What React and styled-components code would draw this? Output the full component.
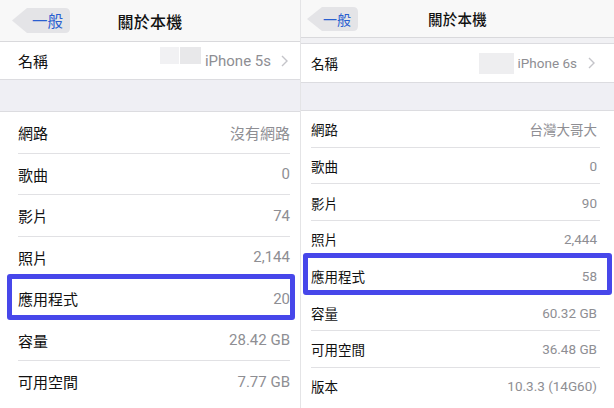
import React from 'react';
import styled, { createGlobalStyle } from 'styled-components';

const GlobalStyle = createGlobalStyle`
  html, body { margin: 0; padding: 0; background: #fff; }
  body { font-family: Roboto, "Noto Sans CJK TC", sans-serif; -webkit-font-smoothing: antialiased; }
  * { box-sizing: border-box; }
`;

const LEFT = {
  width: 300, font: 15, titleFont: 16, backFont: 15.5,
  navH: 42, bandH: 0, nameH: 38, gapH: 32, rowH: 41.5,
  padL: 18, padR: 10, sepR: 10,
  back: { x: 12, top: 8, w: 58, h: 25, textPad: 20 },
  hl: { top: -4, bottom: 0, left: 7, right: 5 },
  chevGap: 10,
  name: 'iPhone 5s',
  boxes: [{ w: 19, h: 17, c: '#f1f1f3' }, { w: 21, h: 17, c: '#e8e8ea' }],
  boxShift: -5,
  rows: [
    ['網路', '沒有網路'], ['歌曲', '0'], ['影片', '74'], ['照片', '2,144'],
    ['應用程式', '20', true], ['容量', '28.42 GB'], ['可用空間', '7.77 GB'],
  ],
};

const RIGHT = {
  width: 314, font: 13.5, titleFont: 14.5, backFont: 14,
  navH: 38, bandH: 6, nameH: 39, gapH: 28, rowH: 36.7,
  padL: 10, padR: 17, sepR: 14,
  back: { x: 6, top: 8, w: 51, h: 24, textPad: 16 },
  hl: { top: -5, bottom: -1, left: 2, right: 2 },
  chevGap: 11,
  name: 'iPhone 6s',
  boxes: [{ w: 35, h: 21, c: '#eeeef0' }],
  boxShift: 0,
  rows: [
    ['網路', '台灣大哥大'], ['歌曲', '0'], ['影片', '90'], ['照片', '2,444'],
    ['應用程式', '58', true], ['容量', '60.32 GB'], ['可用空間', '36.48 GB'],
    ['版本', '10.3.3 (14G60)'],
  ],
};

const Page = styled.div`
  display: flex;
  width: 614px;
  height: 408px;
  overflow: hidden;
  background: #fff;
`;

const Panel = styled.section`
  position: relative;
  flex: 0 0 ${(p) => p.$w}px;
  display: flex;
  flex-direction: column;
  background: #fff;
  border-left: ${(p) => (p.$divider ? '1px solid #e4e4e6' : 'none')};
`;

const NavBar = styled.header`
  height: ${(p) => p.$h}px;
  flex: 0 0 auto;
  display: grid;
  grid-template-columns: 1fr auto 1fr;
  align-items: center;
  background: #f8f8f8;
  border-bottom: 1px solid #d9d9dc;
`;

const BackButton = styled.div`
  position: relative;
  justify-self: start;
  margin-left: ${(p) => p.$x}px;
  width: ${(p) => p.$w}px;
  height: ${(p) => p.$h}px;
  display: flex;
  align-items: center;
  padding-left: ${(p) => p.$pad}px;
  color: #2a5fd0;
  font-family: "Noto Sans CJK TC", sans-serif;
  font-size: ${(p) => p.$font}px;
  line-height: 1;
`;

const BackShape = styled.svg`
  position: absolute;
  inset: 0;
  z-index: 0;
`;

const BackLabel = styled.span`
  position: relative;
  z-index: 1;
`;

const Title = styled.h1`
  margin: 0;
  font-family: "Noto Sans CJK TC", sans-serif;
  font-size: ${(p) => p.$font}px;
  font-weight: 500;
  color: #111;
  letter-spacing: 0.3px;
`;

const Band = styled.div`
  height: ${(p) => p.$h}px;
  flex: 0 0 auto;
  background: #f1f1f4;
  border-bottom: 1px solid #dcdce0;
`;

const Row = styled.div`
  position: relative;
  flex: 0 0 ${(p) => p.$h}px;
  height: ${(p) => p.$h}px;
  display: flex;
  align-items: center;
  padding: 0 ${(p) => p.$padR}px 0 ${(p) => p.$padL}px;
  font-size: ${(p) => p.$font}px;
  background: #fff;

  &::after {
    content: '';
    display: ${(p) => (p.$sep ? 'block' : 'none')};
    position: absolute;
    left: ${(p) => p.$padL}px;
    right: ${(p) => p.$sepR}px;
    bottom: 0;
    height: 1px;
    background: #e1e1e4;
  }
`;

const NameRow = styled(Row)`
  border-bottom: 1px solid #dcdce0;
`;

const Highlight = styled.div`
  position: absolute;
  top: ${(p) => p.$hl.top}px;
  bottom: ${(p) => p.$hl.bottom}px;
  left: ${(p) => p.$hl.left}px;
  right: ${(p) => p.$hl.right}px;
  border: 5px solid #4747ea;
  border-radius: 3px;
  z-index: 2;
`;

const Label = styled.span`
  flex: 1;
  font-family: "Noto Sans CJK TC", sans-serif;
  color: #111;
`;

const Value = styled.span`
  color: #8e8e93;
  font-family: Roboto, "Noto Sans CJK TC", sans-serif;
  white-space: nowrap;
`;

const Placeholders = styled.div`
  display: flex;
  gap: 1px;
  margin-right: 4px;
  transform: translateY(${(p) => p.$shift}px);
`;

const Blur = styled.span`
  display: block;
  width: ${(p) => p.$w}px;
  height: ${(p) => p.$h}px;
  background: ${(p) => p.$c};
`;

const Chevron = styled.svg`
  margin-left: ${(p) => p.$gap}px;
  margin-right: 2px;
  flex: 0 0 auto;
`;

const Gap = styled.div`
  flex: 0 0 ${(p) => p.$h}px;
  background: #efeff4;
  border-bottom: 1px solid #dcdce0;
`;

function Phone({ cfg, divider }) {
  const { back } = cfg;
  return (
    <Panel $w={cfg.width} $divider={divider}>
      <NavBar $h={cfg.navH}>
        <BackButton $x={back.x} $w={back.w} $h={back.h} $pad={back.textPad} $font={cfg.backFont}>
          <BackShape width={back.w} height={back.h} viewBox={`0 0 ${back.w} ${back.h}`}>
            <path
              d={`M15 0 H${back.w - 5} Q${back.w} 0 ${back.w} 5 V${back.h - 5} Q${back.w} ${back.h} ${back.w - 5} ${back.h} H15 L0 ${back.h / 2} Z`}
              fill="#e4e4e7"
            />
          </BackShape>
          <BackLabel>一般</BackLabel>
        </BackButton>
        <Title $font={cfg.titleFont}>關於本機</Title>
        <span />
      </NavBar>
      {cfg.bandH > 0 && <Band $h={cfg.bandH} />}
      <NameRow $h={cfg.nameH} $padL={cfg.padL} $padR={cfg.padR} $font={cfg.font}>
        <Label>名稱</Label>
        <Placeholders $shift={cfg.boxShift}>
          {cfg.boxes.map((b, i) => (
            <Blur key={i} $w={b.w} $h={b.h} $c={b.c} />
          ))}
        </Placeholders>
        <Value>{cfg.name}</Value>
        <Chevron $gap={cfg.chevGap} width="7" height="12" viewBox="0 0 7 12">
          <polyline points="1,1 6,6 1,11" fill="none" stroke="#c4c4c9" strokeWidth="1.4" />
        </Chevron>
      </NameRow>
      <Gap $h={cfg.gapH} />
      {cfg.rows.map(([label, value, hl], i) => (
        <Row
          key={label}
          $h={cfg.rowH}
          $padL={cfg.padL}
          $padR={cfg.padR}
          $sepR={cfg.sepR}
          $font={cfg.font}
          $sep={i < cfg.rows.length - 1}
        >
          <Label>{label}</Label>
          <Value>{value}</Value>
          {hl && <Highlight $hl={cfg.hl} />}
        </Row>
      ))}
    </Panel>
  );
}

export default function App() {
  return (
    <>
      <GlobalStyle />
      <Page>
        <Phone cfg={LEFT} />
        <Phone cfg={RIGHT} divider />
      </Page>
    </>
  );
}
